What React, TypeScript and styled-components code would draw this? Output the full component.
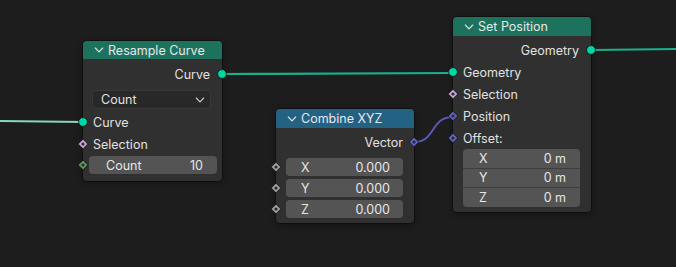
import styled, { createGlobalStyle } from "styled-components";

const GlobalStyle = createGlobalStyle`
  html, body {
    margin: 0;
    padding: 0;
    background: #1d1d1d;
  }
  body {
    font-family: Inter, "DejaVu Sans", sans-serif;
    -webkit-font-smoothing: antialiased;
  }
`;

const Canvas = styled.div`
  position: relative;
  width: 676px;
  height: 267px;
  overflow: hidden;
  background-color: #1d1d1d;
`;

const Links = styled.svg`
  position: absolute;
  left: 0;
  top: 0;
  width: 676px;
  height: 267px;
  pointer-events: none;
`;

const NodeBox = styled.div<{ $left: number; $top: number; $width: number }>`
  position: absolute;
  left: ${({ $left }) => $left}px;
  top: ${({ $top }) => $top}px;
  width: ${({ $width }) => $width}px;
  background-color: #303030;
  border-radius: 4px;
  box-shadow: 0 0 0 1px rgba(0, 0, 0, 0.35), 0 2px 6px rgba(0, 0, 0, 0.35);
  color: #e0e0e0;
  font-size: 12.5px;
`;

const Header = styled.div<{ $color: string; $height: number }>`
  display: flex;
  align-items: center;
  gap: 4px;
  height: ${({ $height }) => $height}px;
  padding-left: 11px;
  background-color: ${({ $color }) => $color};
  border-radius: 4px 4px 0 0;
  color: #e8e8e8;
  font-size: 12.5px;
  white-space: nowrap;
`;

const Body = styled.div<{ $top: number; $bottom: number }>`
  display: flex;
  flex-direction: column;
  padding-top: ${({ $top }) => $top}px;
  padding-bottom: ${({ $bottom }) => $bottom}px;
`;

const Row = styled.div<{ $out?: boolean; $h?: number; $mt?: number; $pr?: number }>`
  position: relative;
  display: flex;
  align-items: center;
  justify-content: ${({ $out }) => ($out ? "flex-end" : "flex-start")};
  height: ${({ $h }) => $h ?? 22}px;
  margin-top: ${({ $mt }) => $mt ?? 0}px;
  padding: 0 ${({ $pr }) => $pr ?? 12}px 0 10px;
  white-space: nowrap;
`;

const FieldRow = styled.div<{ $mt?: number; $l: number; $r: number }>`
  position: relative;
  height: 18px;
  margin-top: ${({ $mt }) => $mt ?? 0}px;
  padding: 0 ${({ $r }) => $r}px 0 ${({ $l }) => $l}px;
`;

const Field = styled.div<{ $pl: number; $pr: number }>`
  display: flex;
  align-items: center;
  justify-content: space-between;
  height: 100%;
  padding: 0 ${({ $pr }) => $pr}px 0 ${({ $pl }) => $pl}px;
  background-color: #545454;
  border-radius: 4px;
  color: #e6e6e6;
`;

const FieldStack = styled.div`
  display: flex;
  flex-direction: column;
  margin: 0 11px 0 10px;
  border-radius: 4px;
  overflow: hidden;
  background-color: #545454;
`;

const StackItem = styled.div<{ $last?: boolean }>`
  display: flex;
  align-items: center;
  justify-content: space-between;
  height: 18.6px;
  padding: 0 14px 0 16px;
  border-bottom: ${({ $last }) => ($last ? "none" : "1px solid #3e3e3e")};
  color: #e6e6e6;
`;

const Dropdown = styled.div`
  display: flex;
  align-items: center;
  justify-content: space-between;
  height: 19px;
  margin: 5px 11px 0 9px;
  padding: 0 5px 0 8px;
  box-sizing: border-box;
  background-color: #282828;
  border: 1px solid #3a3a3a;
  border-radius: 4px;
  color: #e0e0e0;
`;

const SocketSpot = styled.svg<{ $side: "left" | "right" }>`
  position: absolute;
  top: 50%;
  ${({ $side }) => ($side === "left" ? "left: -6px;" : "right: -6px;")}
  width: 12px;
  height: 12px;
  margin-top: -6px;
  overflow: visible;
`;

type SocketProps = {
  side: "left" | "right";
  color: string;
  shape: "circle" | "diamond";
  dot?: string;
};

const Socket = ({ side, color, shape, dot }: SocketProps) => (
  <SocketSpot $side={side} viewBox="0 0 12 12">
    {shape === "circle" ? (
      <circle cx="6" cy="6" r="4.4" fill={color} stroke="#111" strokeWidth="0.8" />
    ) : (
      <>
        <polygon points="6,1.2 10.8,6 6,10.8 1.2,6" fill={color} stroke="#111" strokeWidth="0.8" />
        <circle cx="6" cy="6" r="1.6" fill={dot ?? "#2a2a2a"} />
      </>
    )}
  </SocketSpot>
);

const Chevron = ({ size = 10, color = "#e0e0e0" }: { size?: number; color?: string }) => (
  <svg width={size} height={size} viewBox="0 0 10 10">
    <polyline points="1.3,3 5,6.8 8.7,3" fill="none" stroke={color} strokeWidth="1.15" strokeLinecap="round" strokeLinejoin="round" />
  </svg>
);

type NodeProps = {
  left: number;
  top: number;
  width: number;
  title: string;
  color: string;
  headerHeight: number;
  padTop: number;
  padBottom: number;
  children: React.ReactNode;
};

const Node = ({ left, top, width, title, color, headerHeight, padTop, padBottom, children }: NodeProps) => (
  <NodeBox $left={left} $top={top} $width={width}>
    <Header $color={color} $height={headerHeight}>
      <Chevron />
      <span>{title}</span>
    </Header>
    <Body $top={padTop} $bottom={padBottom}>
      {children}
    </Body>
  </NodeBox>
);

const GEO = "#00d6a3";
const SEL = "#cba6d8";
const INT = "#5f9a62";
const FLOAT = "#a1a1a1";
const VEC = "#6363c7";

export default function App() {
  return (
    <>
      <GlobalStyle />
      <Canvas>
        <Links viewBox="0 0 676 267">
          <path d="M0 121 L83 122" stroke="#8ad6c4" strokeWidth="2" fill="none" />
          <path d="M222 74 C300 74 380 73 453 73" stroke="#19b08b" strokeWidth="2.2" fill="none" />
          <path d="M591 50 L676 49" stroke="#19b08b" strokeWidth="2.2" fill="none" />
          <path d="M414 142 C436 142 430 117 453 117" stroke="#5a5ab4" strokeWidth="2" fill="none" />
        </Links>

        <Node left={83} top={41} width={139} title="Resample Curve" color="#1d725e" headerHeight={18} padTop={4} padBottom={7}>
          <Row $out>
            Curve
            <Socket side="right" color={GEO} shape="circle" />
          </Row>
          <Dropdown>
            <span>Count</span>
            <Chevron size={10} color="#cfcfcf" />
          </Dropdown>
          <Row $mt={2}>
            <Socket side="left" color={GEO} shape="circle" />
            Curve
          </Row>
          <Row>
            <Socket side="left" color={SEL} shape="diamond" />
            Selection
          </Row>
          <FieldRow $mt={1} $l={6} $r={5}>
            <Socket side="left" color={INT} shape="diamond" />
            <Field $pl={17} $pr={14}>
              <span>Count</span>
              <span>10</span>
            </Field>
          </FieldRow>
        </Node>

        <Node left={276} top={109} width={138} title="Combine XYZ" color="#246283" headerHeight={19} padTop={3} padBottom={5}>
          <Row $out $h={22} $pr={11}>
            Vector
            <Socket side="right" color={VEC} shape="diamond" />
          </Row>
          {["X", "Y", "Z"].map((axis, i) => (
            <FieldRow key={axis} $mt={i === 0 ? 5 : 3} $l={10} $r={11}>
              <Socket side="left" color={FLOAT} shape="diamond" />
              <Field $pl={15} $pr={13}>
                <span>{axis}</span>
                <span>0.000</span>
              </Field>
            </FieldRow>
          ))}
        </Node>

        <Node left={453} top={17} width={138} title="Set Position" color="#1d725e" headerHeight={19} padTop={3} padBottom={5}>
          <Row $out>
            Geometry
            <Socket side="right" color={GEO} shape="circle" />
          </Row>
          <Row>
            <Socket side="left" color={GEO} shape="circle" />
            Geometry
          </Row>
          <Row>
            <Socket side="left" color={SEL} shape="diamond" />
            Selection
          </Row>
          <Row>
            <Socket side="left" color={VEC} shape="diamond" />
            Position
          </Row>
          <Row>
            <Socket side="left" color={VEC} shape="diamond" />
            Offset:
          </Row>
          <FieldStack>
            {["X", "Y", "Z"].map((axis, i) => (
              <StackItem key={axis} $last={i === 2}>
                <span>{axis}</span>
                <span>0 m</span>
              </StackItem>
            ))}
          </FieldStack>
        </Node>
      </Canvas>
    </>
  );
}
